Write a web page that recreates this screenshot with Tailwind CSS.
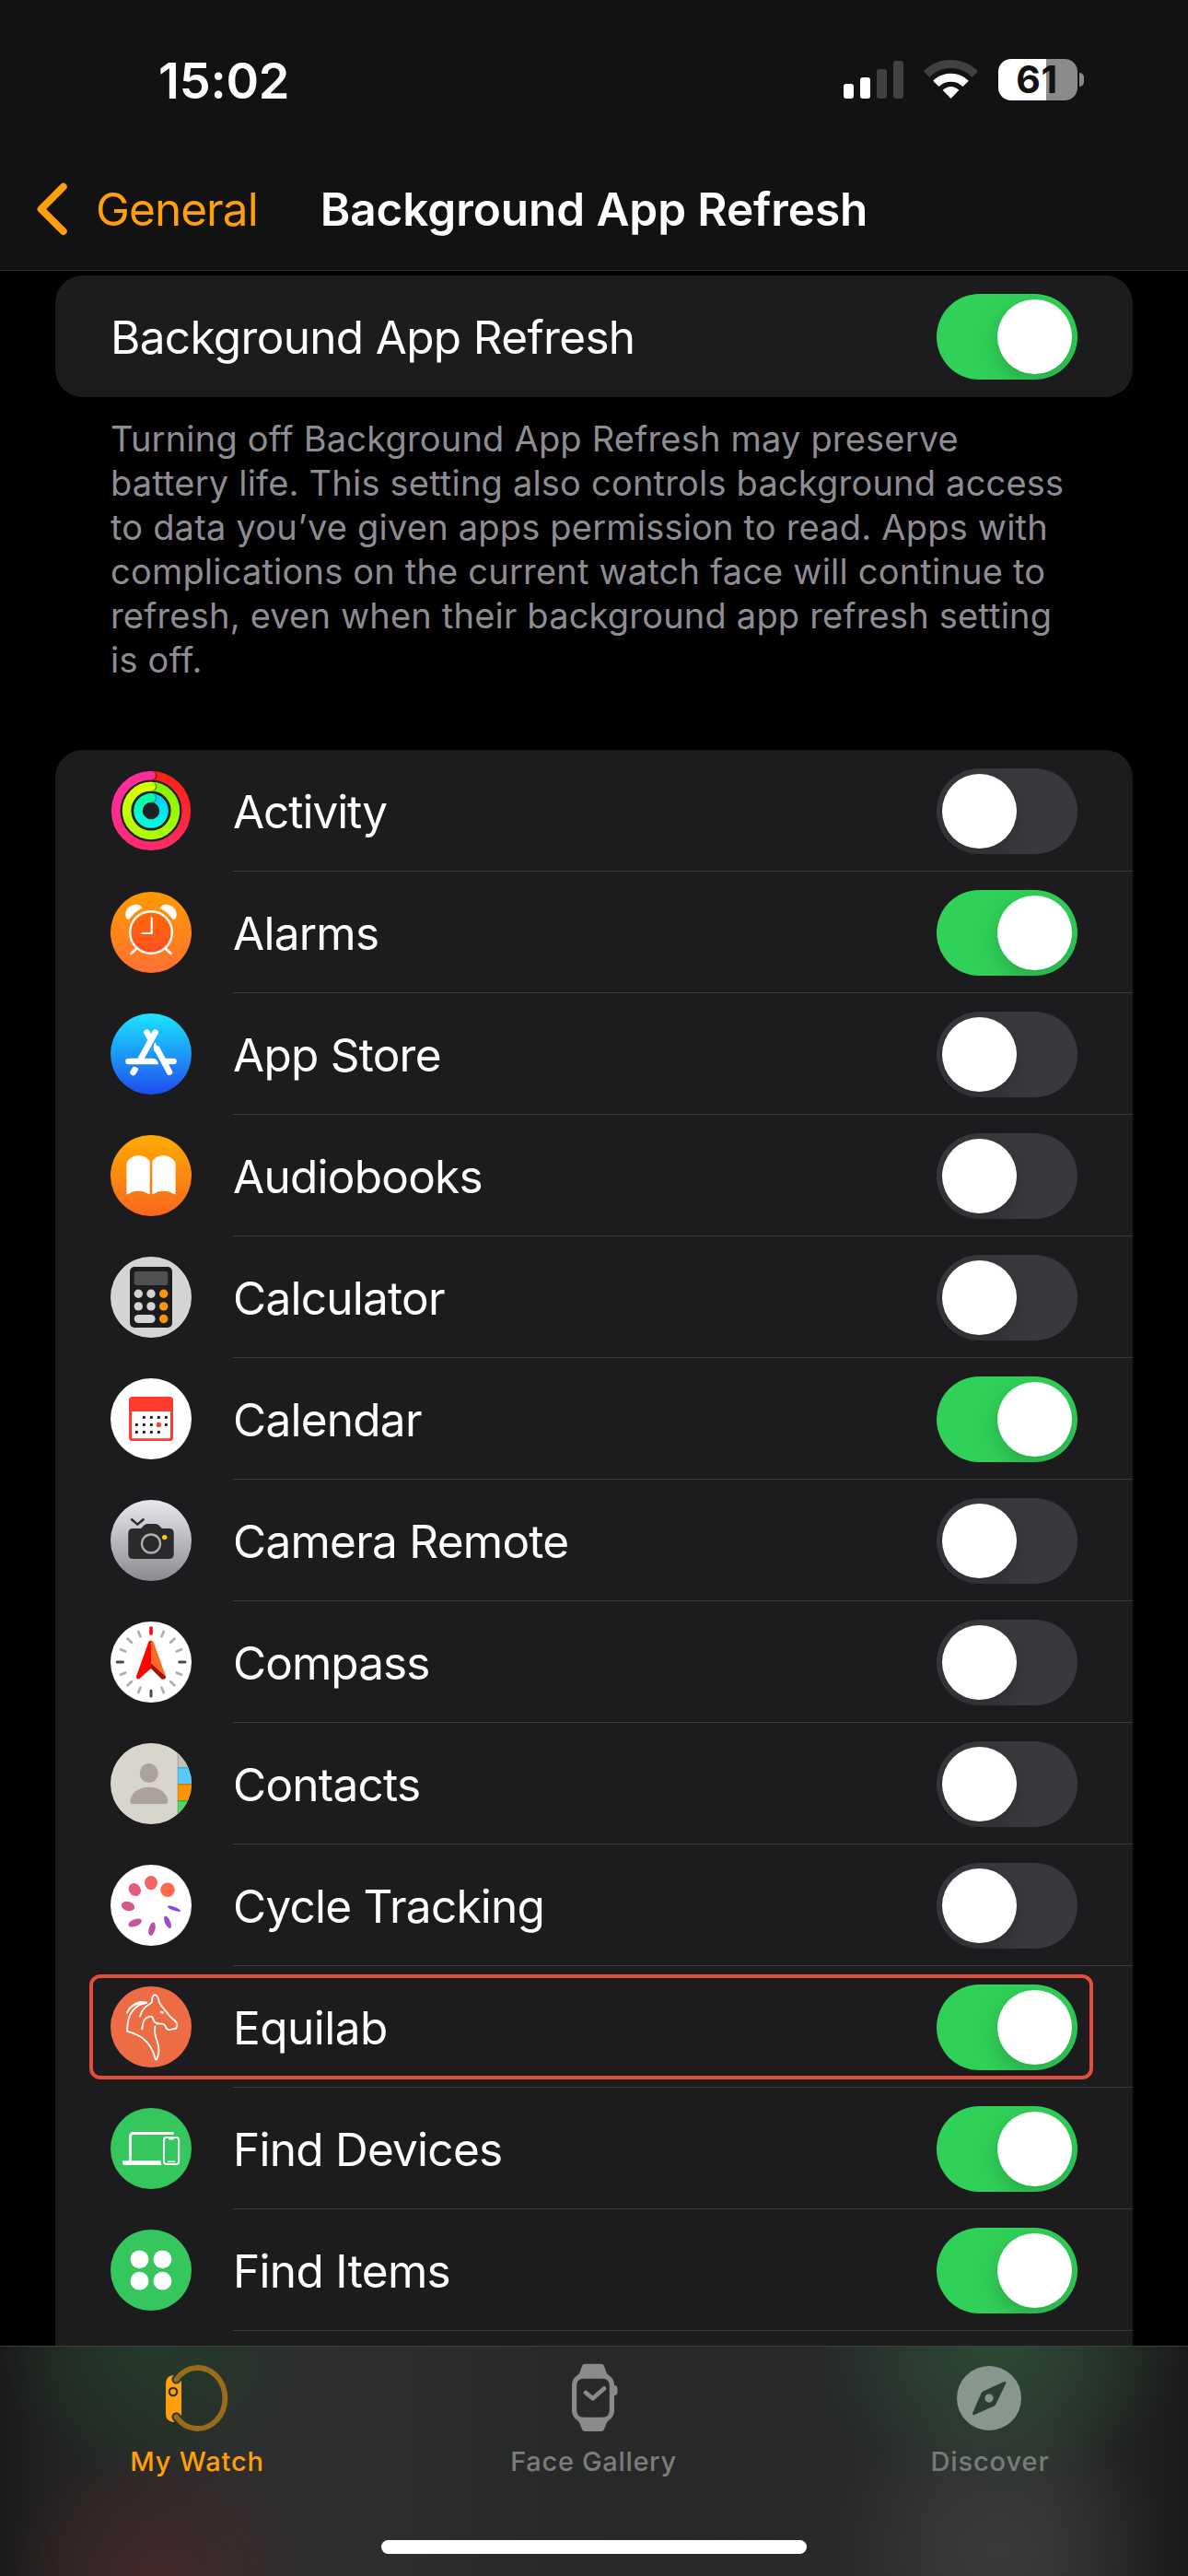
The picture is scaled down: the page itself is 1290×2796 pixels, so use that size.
<!DOCTYPE html>
<html lang="en">
<head>
<meta charset="utf-8">
<title>Background App Refresh</title>
<script src="https://cdn.jsdelivr.net/npm/@tailwindcss/browser@4"></script>
</head>
<body class="bg-black">
<div class="w-[1290px] h-[2796px] overflow-hidden bg-black text-white font-['Inter',sans-serif] flex flex-col">

  <!-- Status bar and navigation bar -->
  <header class="h-[294px] shrink-0 bg-[#121212] border-b border-[#2a2a2b] flex flex-col">
    <div class="h-[197px] pl-[172px] pr-[113px] flex justify-between items-start">
      <div class="pt-[55px] text-[54px] leading-[65px] font-semibold tracking-[-0.2px]">15:02</div>
      <div class="pt-[64px] flex items-start">
        <svg class="w-[66px] h-[45px]" viewBox="0 0 66 45">
          <rect x="0" y="27" width="11" height="16" rx="3" fill="#fff"/>
          <rect x="18" y="20" width="11" height="23" rx="3" fill="#fff"/>
          <rect x="36" y="11" width="11" height="32" rx="3" fill="#414141"/>
          <rect x="54" y="2" width="11" height="41" rx="3" fill="#414141"/>
        </svg>
        <svg class="w-[58px] h-[45px] ml-[21px]" viewBox="0 0 58 45" fill="none" stroke-width="9">
          <path d="M3 16.5A37.5 37.5 0 0 1 56 16.5" stroke="#414141"/>
          <path d="M13.3 26.9A22.8 22.8 0 0 1 45.7 26.9" stroke="#fff"/>
          <path d="M29.5 43L20.6 33.8Q29.5 26 38.4 33.8Z" fill="#fff"/>
        </svg>
        <div class="ml-[23px] w-[86px] h-[45px] rounded-[14px] bg-[linear-gradient(90deg,#fff_0_52px,#8a8a8a_52px)] flex items-center justify-center text-[#121212] text-[41px] leading-[45px] font-bold tracking-[0.5px] pr-[2px]">61</div>
        <div class="ml-[2px] mt-[15px] w-[5px] h-[15px] rounded-r-[5px] bg-[#8a8a8a]"></div>
      </div>
    </div>
    <div class="grid grid-cols-[1fr_auto_1fr] pl-[39px] pr-[39px]">
      <div class="flex items-start text-[#ff9f0a]">
        <svg class="w-[36px] h-[60px]" viewBox="0 0 36 60" fill="none" stroke="#ff9f0a" stroke-width="8" stroke-linecap="round" stroke-linejoin="round"><path d="M29.7 5.7L5.6 30L29.7 54"/></svg>
        <span class="ml-[29px] text-[49.5px] leading-[60px] tracking-[-0.95px]">General</span>
      </div>
      <h1 class="text-[49.5px] leading-[60px] font-semibold tracking-[-0.08px] whitespace-nowrap">Background App Refresh</h1>
      <div></div>
    </div>
  </header>

  <main class="h-[2252px] shrink-0 overflow-hidden px-[60px] flex flex-col">
    <section class="mt-[5px] h-[132px] shrink-0 rounded-[30px] bg-[#1c1c1e] pl-[60px] pr-[60px] pt-[2px] pb-px flex items-center justify-between">
      <span class="pt-[2px] text-[49.5px] leading-[61px] tracking-[-0.67px]">Background App Refresh</span>
      <span class="w-[153px] h-[93px] rounded-full bg-[#30d158] p-[6px] flex justify-end overflow-hidden"><i class="block size-[81px] rounded-full bg-white shadow-[0_9px_24px_rgba(0,0,0,0.2)]"></i></span>
    </section>

    <p class="mt-[21px] ml-[60px] text-[38px] leading-[48px] tracking-[0.2px] text-[#8d8d93] whitespace-nowrap">Turning off Background App Refresh may preserve<br>battery life. This setting also controls background access<br>to data you’ve given apps permission to read. Apps with<br>complications on the current watch face will continue to<br>refresh, even when their background app refresh setting<br>is off.</p>

    <ul class="mt-[74px] shrink-0 h-[1800px] rounded-t-[30px] bg-[#1c1c1e] pl-[60px] text-[49.5px] leading-[61px] tracking-[-0.75px]">

      <li class="h-[132px] flex items-center gap-[45px]">
        <svg class="size-[88px] shrink-0" viewBox="0 0 88 88" fill="none">
          <defs>
            <linearGradient id="r1" x1="0" y1="0" x2="0" y2="88" gradientUnits="userSpaceOnUse"><stop stop-color="#fc2113"/><stop offset=".5" stop-color="#ff2730"/><stop offset="1" stop-color="#ff2a6c"/></linearGradient>
            <linearGradient id="r2" x1="0" y1="0" x2="0" y2="88" gradientUnits="userSpaceOnUse"><stop stop-color="#ff2d9c"/><stop offset=".5" stop-color="#ff2c94"/><stop offset="1" stop-color="#ff2a6c"/></linearGradient>
            <linearGradient id="g1" x1="0" y1="15" x2="0" y2="73" gradientUnits="userSpaceOnUse"><stop stop-color="#86f500"/><stop offset="1" stop-color="#adff00"/></linearGradient>
            <linearGradient id="g2" x1="0" y1="15" x2="0" y2="73" gradientUnits="userSpaceOnUse"><stop stop-color="#dcff00"/><stop offset="1" stop-color="#adff00"/></linearGradient>
            <linearGradient id="b1" x1="0" y1="26" x2="0" y2="62" gradientUnits="userSpaceOnUse"><stop stop-color="#00cfff"/><stop offset="1" stop-color="#00fbe6"/></linearGradient>
            <linearGradient id="b2" x1="0" y1="26" x2="0" y2="62" gradientUnits="userSpaceOnUse"><stop stop-color="#00ffa6"/><stop offset="1" stop-color="#00fbe6"/></linearGradient>
          </defs>
          <circle cx="44" cy="44" r="43" fill="#202022"/>
          <g stroke-width="9.6">
            <path d="M44 5.7a38.3 38.3 0 0 1 0 76.6" stroke="url(#r1)"/><path d="M44 82.3a38.3 38.3 0 0 1 0-76.6" stroke="url(#r2)"/>
            <path d="M44 17.6a26.4 26.4 0 0 1 0 52.8" stroke="url(#g1)"/><path d="M44 70.4a26.4 26.4 0 0 1 0-52.8" stroke="url(#g2)"/>
            <path d="M44 30a14 14 0 0 1 0 28" stroke="url(#b1)"/><path d="M44 58a14 14 0 0 1 0-28" stroke="url(#b2)"/>
          </g>
          <g fill="#000" opacity=".35"><circle cx="46" cy="6.2" r="4.6"/><circle cx="46" cy="18" r="4.6"/><circle cx="46" cy="30.6" r="4.4"/></g>
          <g stroke-width="9.6" stroke-linecap="round"><path d="M42.500 5.700l1.500 0" stroke="#ff2d9c"/><path d="M42.500 17.600l1.500 0" stroke="#dcff00"/><path d="M43 30l1 0" stroke="#00ffa6"/></g>
        </svg>
        <div class="flex-1 h-full border-b border-[#3c3c3f] pr-[60px] pt-[2px] flex items-center justify-between">
          <span class="pt-[2px] tracking-[-1.05px]">Activity</span>
          <span class="w-[153px] h-[93px] rounded-full bg-[#39393d] p-[6px] flex justify-start overflow-hidden"><i class="block size-[81px] rounded-full bg-white shadow-[0_9px_24px_rgba(0,0,0,0.2)]"></i></span>
        </div>
      </li>

      <li class="h-[132px] flex items-center gap-[45px]">
        <svg class="size-[88px] shrink-0" viewBox="0 0 88 88" fill="none">
          <defs><linearGradient id="al" x1="0" y1="0" x2="0" y2="1"><stop stop-color="#ff9a00"/><stop offset="1" stop-color="#ff7034"/></linearGradient><linearGradient id="al2" x1="0" y1="0" x2="0" y2="1"><stop stop-color="#ff6a08"/><stop offset="1" stop-color="#ff5020"/></linearGradient></defs>
          <circle cx="44" cy="44" r="44" fill="url(#al)"/>
          <path d="M29 61L22.700 66.800M59 61L65.300 66.800" stroke="#fff" stroke-width="2.600" stroke-linecap="round"/>
          <circle cx="44" cy="44" r="22.800" fill="url(#al2)" stroke="#fff" stroke-width="2.400"/>
          <path d="M44.700 28.500V45H34.500" stroke="#fff" stroke-width="2.200" stroke-linecap="round" stroke-linejoin="round"/>
          <path d="M20.500 29.500C18 31 16.300 28 16.300 24.500C16.300 18 22 13.800 28 13.800C31.500 13.800 35 16.500 33.700 18C29 20.500 24 24.500 20.500 29.500Z" fill="#fff"/>
          <path d="M67.500 29.500C70 31 71.700 28 71.700 24.500C71.700 18 66 13.800 60 13.800C56.500 13.800 53 16.500 54.300 18C59 20.500 64 24.500 67.500 29.500Z" fill="#fff"/>
        </svg>
        <div class="flex-1 h-full border-b border-[#3c3c3f] pr-[60px] pt-[2px] flex items-center justify-between">
          <span class="pt-[2px]">Alarms</span>
          <span class="w-[153px] h-[93px] rounded-full bg-[#30d158] p-[6px] flex justify-end overflow-hidden"><i class="block size-[81px] rounded-full bg-white shadow-[0_9px_24px_rgba(0,0,0,0.2)]"></i></span>
        </div>
      </li>

      <li class="h-[132px] flex items-center gap-[45px]">
        <svg class="size-[88px] shrink-0" viewBox="0 0 88 88" fill="none">
          <defs><linearGradient id="as" x1="0" y1="0" x2="0" y2="1"><stop stop-color="#1ce6ff"/><stop offset="1" stop-color="#1e4cee"/></linearGradient></defs>
          <circle cx="44" cy="44" r="44" fill="url(#as)"/>
          <g stroke="#fff" stroke-width="6.600" stroke-linecap="round">
            <path d="M39.500 20.700L42.500 26"/><path d="M48.600 20.700L33 49" /><path d="M26.700 60.500L24.600 64"/><path d="M50.500 38.500L64 63.700"/><path d="M59 52H68.500"/>
          </g>
          <path d="M19.500 48.700H46.500Q51.500 49.500 52 55.300H19.500A3.300 3.300 0 0 1 19.500 48.700Z" fill="#fff"/>
          <path d="M48.500 31Q45.500 36 47.500 41L54 44Z" fill="#fff"/>
          <path d="M22 57.300Q26.500 55.600 30 58.600" stroke="#1f72f3" stroke-width="1.600"/>
        </svg>
        <div class="flex-1 h-full border-b border-[#3c3c3f] pr-[60px] pt-[2px] flex items-center justify-between">
          <span class="pt-[2px]">App Store</span>
          <span class="w-[153px] h-[93px] rounded-full bg-[#39393d] p-[6px] flex justify-start overflow-hidden"><i class="block size-[81px] rounded-full bg-white shadow-[0_9px_24px_rgba(0,0,0,0.2)]"></i></span>
        </div>
      </li>

      <li class="h-[132px] flex items-center gap-[45px]">
        <svg class="size-[88px] shrink-0" viewBox="0 0 88 88" fill="none">
          <defs><linearGradient id="ab" x1="0" y1="0" x2="0" y2="1"><stop stop-color="#ffab00"/><stop offset="1" stop-color="#f9661f"/></linearGradient></defs>
          <circle cx="44" cy="44" r="44" fill="url(#ab)"/>
          <path d="M17.400 31Q17.400 29 19 27.500C25 20.500 37 20.500 42.700 28.500V63.500Q42.700 64.700 41.500 64C35 59.500 25.500 59.500 19 64Q17.400 65 17.400 63.500Z" fill="#fff"/>
          <path d="M70.600 31Q70.600 29 69 27.500C63 20.500 51 20.500 45.300 28.500V63.500Q45.300 64.700 46.500 64C53 59.500 62.500 59.500 69 64Q70.600 65 70.600 63.500Z" fill="#fff"/>
        </svg>
        <div class="flex-1 h-full border-b border-[#3c3c3f] pr-[60px] pt-[2px] flex items-center justify-between">
          <span class="pt-[2px]">Audiobooks</span>
          <span class="w-[153px] h-[93px] rounded-full bg-[#39393d] p-[6px] flex justify-start overflow-hidden"><i class="block size-[81px] rounded-full bg-white shadow-[0_9px_24px_rgba(0,0,0,0.2)]"></i></span>
        </div>
      </li>

      <li class="h-[132px] flex items-center gap-[45px]">
        <svg class="size-[88px] shrink-0" viewBox="0 0 88 88" fill="none">
          <circle cx="44" cy="44" r="44" fill="#d4d4d2"/>
          <rect x="21" y="11" width="46" height="66" rx="5" fill="#1c1c1c"/>
          <rect x="25.700" y="16" width="36.600" height="15" rx="2.500" fill="#505050"/>
          <g fill="#d4d4d2"><circle cx="30.300" cy="40.300" r="4.700"/><circle cx="44" cy="40.300" r="4.700"/><circle cx="30.300" cy="53.900" r="4.700"/><circle cx="44" cy="53.900" r="4.700"/><rect x="25.700" y="62.900" width="22.900" height="9.200" rx="4.600"/></g>
          <g fill="#ff9500"><circle cx="57.700" cy="40.300" r="4.700"/><circle cx="57.700" cy="53.900" r="4.700"/><circle cx="57.700" cy="67.500" r="4.700"/></g>
        </svg>
        <div class="flex-1 h-full border-b border-[#3c3c3f] pr-[60px] pt-[2px] flex items-center justify-between">
          <span class="pt-[2px]">Calculator</span>
          <span class="w-[153px] h-[93px] rounded-full bg-[#39393d] p-[6px] flex justify-start overflow-hidden"><i class="block size-[81px] rounded-full bg-white shadow-[0_9px_24px_rgba(0,0,0,0.2)]"></i></span>
        </div>
      </li>

      <li class="h-[132px] flex items-center gap-[45px]">
        <svg class="size-[88px] shrink-0" viewBox="0 0 88 88" fill="none">
          <circle cx="44" cy="44" r="44" fill="#fff"/>
          <rect x="20" y="20" width="48" height="48" rx="3.500" fill="#ff3b30"/>
          <path d="M23 36H65V64Q65 65.200 63.800 65.200H24.200Q23 65.200 23 64Z" fill="#fff"/>
          <g fill="#111"><circle cx="36.400" cy="42.400" r="1.600"/><circle cx="44.400" cy="42.400" r="1.600"/><circle cx="52.400" cy="42.400" r="1.600"/><circle cx="60.400" cy="42.400" r="1.600"/>
          <circle cx="28.400" cy="50.400" r="1.600"/><circle cx="36.400" cy="50.400" r="1.600"/><circle cx="44.400" cy="50.400" r="1.600"/><circle cx="60.400" cy="50.400" r="1.600"/>
          <circle cx="28.400" cy="58.400" r="1.600"/><circle cx="36.400" cy="58.400" r="1.600"/><circle cx="44.400" cy="58.400" r="1.600"/><circle cx="52.400" cy="58.400" r="1.600"/></g>
          <circle cx="52.400" cy="50.400" r="2.600" fill="#ff3b30"/>
        </svg>
        <div class="flex-1 h-full border-b border-[#3c3c3f] pr-[60px] pt-[2px] flex items-center justify-between">
          <span class="pt-[2px]">Calendar</span>
          <span class="w-[153px] h-[93px] rounded-full bg-[#30d158] p-[6px] flex justify-end overflow-hidden"><i class="block size-[81px] rounded-full bg-white shadow-[0_9px_24px_rgba(0,0,0,0.2)]"></i></span>
        </div>
      </li>

      <li class="h-[132px] flex items-center gap-[45px]">
        <svg class="size-[88px] shrink-0" viewBox="0 0 88 88" fill="none">
          <defs><linearGradient id="ca" x1="0" y1="0" x2="0" y2="1"><stop stop-color="#e9e8ee"/><stop offset="1" stop-color="#8a8a90"/></linearGradient></defs>
          <circle cx="44" cy="44" r="44" fill="url(#ca)"/>
          <path d="M24.500 31H33L36.500 27.600Q38 26 40 26H49Q51 26 52.500 27.600L56 31H63.500Q68.700 31 68.700 36V59Q68.700 64 63.500 64H24.500Q19.300 64 19.300 59V36Q19.300 31 24.500 31Z" fill="#2a2a2b"/>
          <circle cx="44" cy="47.500" r="10" stroke="#aeadb4" stroke-width="2.300"/>
          <circle cx="58.700" cy="40.600" r="2.700" fill="#ffcc00"/>
          <path d="M23 21.200L29.300 26.600L35.600 21.200" stroke="#2a2a2b" stroke-width="2.500" stroke-linecap="round" stroke-linejoin="round"/>
        </svg>
        <div class="flex-1 h-full border-b border-[#3c3c3f] pr-[60px] pt-[2px] flex items-center justify-between">
          <span class="pt-[2px]">Camera Remote</span>
          <span class="w-[153px] h-[93px] rounded-full bg-[#39393d] p-[6px] flex justify-start overflow-hidden"><i class="block size-[81px] rounded-full bg-white shadow-[0_9px_24px_rgba(0,0,0,0.2)]"></i></span>
        </div>
      </li>

      <li class="h-[132px] flex items-center gap-[45px]">
        <svg class="size-[88px] shrink-0" viewBox="0 0 88 88" fill="none">
          <circle cx="44" cy="44" r="44" fill="#fff"/>
          <g stroke="#aeaeae" stroke-width="2.700" stroke-linecap="round">
            <path id="tk" d="M44 8.200V14" transform="rotate(22.500 44 44)"/>
            <path d="M44 8.200V14" transform="rotate(45 44 44)"/><path d="M44 8.200V14" transform="rotate(67.500 44 44)"/>
            <path d="M44 8.200V14" transform="rotate(112.500 44 44)"/><path d="M44 8.200V14" transform="rotate(135 44 44)"/><path d="M44 8.200V14" transform="rotate(157.500 44 44)"/>
            <path d="M44 8.200V14" transform="rotate(202.500 44 44)"/><path d="M44 8.200V14" transform="rotate(225 44 44)"/><path d="M44 8.200V14" transform="rotate(247.500 44 44)"/>
            <path d="M44 8.200V14" transform="rotate(292.500 44 44)"/><path d="M44 8.200V14" transform="rotate(315 44 44)"/><path d="M44 8.200V14" transform="rotate(337.500 44 44)"/>
          </g>
          <g stroke="#4a4a4a" stroke-width="3" stroke-linecap="round"><path d="M74.700 44H81M7.200 44H13.500M44 75V81"/></g>
          <path d="M44 7V13" stroke="#ff0a0a" stroke-width="3.700" stroke-linecap="round"/>
          <path d="M44 44L58 62.500Q60.500 62 59.800 59.500L44 49L28.500 59L30 62.500Z" fill="#a31200"/>
          <path d="M44 20.500Q46 20.500 46.800 22.500L60 59.500Q60 60.500 58.800 59.500L44 45.500Z" fill="#ff6a27"/>
          <path d="M44 20.500Q42 20.500 41.200 22.500L28.200 59Q27.500 62.600 31 62.500L44 49.500Z" fill="#ff0400"/>
          <path d="M44 45.500V51L55.500 62.500Q59 63.500 60 59.800Z" fill="#a31200"/>
          <path d="M33.500 60L44 51V46.500L31 62.500Z" fill="#ff0400"/>
        </svg>
        <div class="flex-1 h-full border-b border-[#3c3c3f] pr-[60px] pt-[2px] flex items-center justify-between">
          <span class="pt-[2px] tracking-[-0.95px]">Compass</span>
          <span class="w-[153px] h-[93px] rounded-full bg-[#39393d] p-[6px] flex justify-start overflow-hidden"><i class="block size-[81px] rounded-full bg-white shadow-[0_9px_24px_rgba(0,0,0,0.2)]"></i></span>
        </div>
      </li>

      <li class="h-[132px] flex items-center gap-[45px]">
        <svg class="size-[88px] shrink-0 rounded-full" viewBox="0 0 88 88" fill="none">
          <rect width="88" height="88" fill="#d8d6cc"/>
          <rect x="73" width="15" height="26" fill="#c3bfb9"/>
          <rect x="73" y="26" width="15" height="18" fill="#5ac8fa"/><rect x="73" y="26" width="15" height="1.500" fill="#4fa9d2"/>
          <rect x="73" y="44" width="15" height="18" fill="#ff9500"/><rect x="73" y="44" width="15" height="1.500" fill="#cc7a08"/>
          <rect x="73" y="62" width="15" height="26" fill="#4cd964"/><rect x="73" y="62" width="15" height="1.500" fill="#3fae54"/>
          <rect x="72.600" width="1" height="88" fill="#000" opacity=".2"/>
          <ellipse cx="41.800" cy="32.500" rx="10" ry="10.600" fill="#aaa29b"/>
          <path d="M21.300 63C21.800 55 30 47.800 41.800 47.800S61.800 55 62.300 63Q62.300 66 59.300 66H24.300Q21.300 66 21.300 63Z" fill="#aaa29b"/>
        </svg>
        <div class="flex-1 h-full border-b border-[#3c3c3f] pr-[60px] pt-[2px] flex items-center justify-between">
          <span class="pt-[2px]">Contacts</span>
          <span class="w-[153px] h-[93px] rounded-full bg-[#39393d] p-[6px] flex justify-start overflow-hidden"><i class="block size-[81px] rounded-full bg-white shadow-[0_9px_24px_rgba(0,0,0,0.2)]"></i></span>
        </div>
      </li>

      <li class="h-[132px] flex items-center gap-[45px]">
        <svg class="size-[88px] shrink-0" viewBox="0 0 88 88" fill="none">
          <circle cx="44" cy="44" r="44" fill="#fff"/>
          <ellipse cx="44" cy="19.600" rx="7" ry="7.700" fill="#f26562"/>
          <circle cx="62" cy="27.300" r="7.800" fill="#ff6a4d"/>
          <ellipse cx="26.300" cy="27" rx="6.300" ry="7.400" transform="rotate(-35 26.300 27)" fill="#e25d77"/>
          <ellipse cx="19" cy="45" rx="7.300" ry="5" transform="rotate(15 19 45)" fill="#d45b87"/>
          <ellipse cx="26.700" cy="63" rx="7.700" ry="3.800" transform="rotate(-22 26.700 63)" fill="#c9569b"/>
          <ellipse cx="45" cy="69.700" rx="3.400" ry="7.400" transform="rotate(15 45 69.700)" fill="#b853a7"/>
          <ellipse cx="62" cy="62.300" rx="2.900" ry="7.200" transform="rotate(-24 62 62.300)" fill="#9a4cd0"/>
          <ellipse cx="69" cy="47.700" rx="7.500" ry="1.900" transform="rotate(20 69 47.700)" fill="#7a45f5"/>
        </svg>
        <div class="flex-1 h-full border-b border-[#3c3c3f] pr-[60px] pt-[2px] flex items-center justify-between">
          <span class="pt-[2px]">Cycle Tracking</span>
          <span class="w-[153px] h-[93px] rounded-full bg-[#39393d] p-[6px] flex justify-start overflow-hidden"><i class="block size-[81px] rounded-full bg-white shadow-[0_9px_24px_rgba(0,0,0,0.2)]"></i></span>
        </div>
      </li>

      <li class="relative h-[132px] flex items-center gap-[45px]">
        <svg class="size-[88px] shrink-0" viewBox="0 0 88 88" fill="none">
          <circle cx="44" cy="44" r="44" fill="#ee6c43"/>
          <g stroke="#fff" stroke-width="1.800" stroke-linecap="round" stroke-linejoin="round">
            <path d="M32 32.700C33.500 27.500 37 22.500 40.500 20.500C43 19 45 18 45 16.500C44.800 13 46 9.200 48.300 9.200C51 9.400 52.300 14 53 17.500C55 22 58 24 60.500 27.500C64 32.500 68 36 71 38.500C72.800 40.500 72.500 43.500 71 45.500C69.500 46.700 67.500 45.700 66 46.700C63.500 48 61 46.500 60.300 45C59.500 42.500 59.500 41.500 56.500 40.700C53.500 40.300 50.500 41.300 48.200 39C46.500 37.500 46.500 34.500 45 33C41.500 32 37.500 34.500 36 38C34.700 41 34.700 43.500 34.300 46.300"/>
            <path d="M18 28.700C20.500 22.500 26.500 17.500 33 17C35.500 16.900 37.500 17 39.300 17.700C36.500 19.200 33 19 29.500 21.500C20.500 27.500 18.500 36.500 18 48.700C23 50.500 29 52 34.500 56C42 61.500 46.500 70 48.700 78.500C49 80 50 80 50.300 78.800C53.500 72 53 66.500 51 60.500C48.500 54.500 47 50 48.500 43.500"/>
            <path d="M20 24.500C25 19.500 30 18 37.500 17.800"/>
          </g>
          <ellipse cx="55.700" cy="28.200" rx="2.100" ry="1.200" transform="rotate(20 55.700 28.200)" fill="#fff"/>
        </svg>
        <div class="flex-1 h-full border-b border-[#3c3c3f] pr-[60px] pt-[2px] flex items-center justify-between">
          <span class="pt-[2px] tracking-[-0.5px]">Equilab</span>
          <span class="w-[153px] h-[93px] rounded-full bg-[#30d158] p-[6px] flex justify-end overflow-hidden"><i class="block size-[81px] rounded-full bg-white shadow-[0_9px_24px_rgba(0,0,0,0.2)]"></i></span>
        </div>
        <div class="absolute left-[-23px] right-[43px] top-[9px] h-[114px] border-4 border-[#e54e3a] rounded-[12px]"></div>
      </li>

      <li class="h-[132px] flex items-center gap-[45px]">
        <svg class="size-[88px] shrink-0" viewBox="0 0 88 88" fill="none">
          <circle cx="44" cy="44" r="44" fill="#35c75d"/>
          <path d="M67.500 27.500H25Q21.500 27.500 21.500 31V58" stroke="#fff" stroke-width="2.800" stroke-linecap="round"/>
          <path d="M13 57.300H54.500Q54.500 60 55.500 62H15.500Q13 62 13 59.500Z" fill="#fff"/>
          <rect x="58" y="32" width="16.200" height="29" rx="2.800" stroke="#fff" stroke-width="2"/>
          <path d="M63 32H69V33.200Q69 34.600 67.500 34.600H64.500Q63 34.600 63 33.200Z" fill="#fff"/>
          <path d="M62.500 58.300H69.700" stroke="#fff" stroke-width="1.400" stroke-linecap="round"/>
        </svg>
        <div class="flex-1 h-full border-b border-[#3c3c3f] pr-[60px] pt-[2px] flex items-center justify-between">
          <span class="pt-[2px]">Find Devices</span>
          <span class="w-[153px] h-[93px] rounded-full bg-[#30d158] p-[6px] flex justify-end overflow-hidden"><i class="block size-[81px] rounded-full bg-white shadow-[0_9px_24px_rgba(0,0,0,0.2)]"></i></span>
        </div>
      </li>

      <li class="h-[132px] flex items-center gap-[45px]">
        <svg class="size-[88px] shrink-0" viewBox="0 0 88 88" fill="none">
          <circle cx="44" cy="44" r="44" fill="#35c75d"/>
          <g fill="#fff"><circle cx="31.500" cy="32.300" r="9.900"/><circle cx="56.400" cy="32.300" r="9.900"/><circle cx="31.500" cy="55.700" r="9.900"/><circle cx="56.400" cy="55.700" r="9.900"/></g>
        </svg>
        <div class="flex-1 h-full border-b border-[#3c3c3f] pr-[60px] pt-[2px] flex items-center justify-between">
          <span class="pt-[2px] tracking-[-0.67px]">Find Items</span>
          <span class="w-[153px] h-[93px] rounded-full bg-[#30d158] p-[6px] flex justify-end overflow-hidden"><i class="block size-[81px] rounded-full bg-white shadow-[0_9px_24px_rgba(0,0,0,0.2)]"></i></span>
        </div>
      </li>
    </ul>
  </main>

  <footer class="h-[250px] shrink-0 border-t border-[#3d3d3f] bg-[radial-gradient(ellipse_170px_150px_at_165px_0px,rgba(34,62,42,0.85),rgba(34,62,42,0)),radial-gradient(ellipse_170px_150px_at_170px_250px,rgba(72,40,42,0.85),rgba(72,40,42,0)),radial-gradient(ellipse_200px_150px_at_1085px_0px,rgba(42,74,52,0.95),rgba(42,74,52,0)),radial-gradient(ellipse_180px_160px_at_1085px_220px,rgba(60,61,60,0.8),rgba(60,61,60,0)),linear-gradient(90deg,#191a19_0%,#222322_5%,#2d2e2e_20%,#2d2d2d_35%,#28292a_45%,#282828_62%,#27292a_72%,#2d302f_80%,#2c2f2d_88%,#222422_94%,#1a1a1a_100%)]">
    <nav class="flex pt-[18px]">
      <div class="flex-1 flex flex-col items-center gap-[13px] text-[#ff9f0a]">
        <svg class="w-[74px] h-[76px]" viewBox="0 1 74 76" fill="none">
          <defs><mask id="gap"><rect width="74" height="80" fill="#fff"/><path d="M13.500 18.600A29.600 33 0 1 1 13.500 59.400" stroke="#000" stroke-width="10" stroke-linecap="round"/><circle cx="10" cy="32" r="4.200" stroke="#000" stroke-width="2.200"/></mask></defs>
          <path mask="url(#gap)" d="M10 14H14Q19 15 19 22V57Q19 64 14 65H10Q2 64 2 56V23Q2 15 10 14Z" fill="#ff9f0a"/>
          <path d="M13.500 18.600A29.600 33 0 1 1 13.500 59.400" stroke="#ff9f0a" stroke-opacity=".53" stroke-width="5.800" stroke-linecap="round"/>
        </svg>
        <span class="text-[29px] leading-[35px] font-medium tracking-[0.85px] mr-[2px]">My Watch</span>
      </div>
      <div class="flex-1 flex flex-col items-center gap-[13px] text-[#7c7c7c]">
        <svg class="w-[50px] h-[76px] overflow-visible" viewBox="0 0 50 76" fill="none">
          <path fill="#8a8a8a" fill-rule="evenodd" d="M15.500 .8H32.500Q35 .8 36 3L38.500 10.300Q39.500 12.300 41.500 13.500Q47 17 47 24V51Q47 58 41.500 61.800Q39.500 63 38.500 65.300L36 72Q35 74 32.500 74H15.500Q13 74 12 72L9.500 65.300Q8.500 63 6.500 61.800Q1 58 1 51V24Q1 17 6.500 13.500Q8.500 12.300 9.500 10.300L12 3Q13 .8 15.500 .8ZM14 16.700Q6.200 16.700 6.200 24.500V51Q6.200 58.700 14 58.700H34Q41.800 58.700 41.800 51V24.500Q41.800 16.700 34 16.700Z"/>
          <path d="M47 24Q50.500 24 50.500 28V31Q50.500 35 47 35Z" fill="#8a8a8a"/>
          <path d="M16 32L23.700 38.300L36 27.500" stroke="#8a8a8a" stroke-width="4.700" stroke-linecap="round" stroke-linejoin="round"/>
        </svg>
        <span class="text-[29px] leading-[35px] font-medium tracking-[0.66px] mr-[1px]">Face Gallery</span>
      </div>
      <div class="flex-1 flex flex-col items-center gap-[13px] text-white/37">
        <svg class="w-[72px] h-[76px]" viewBox="0 0 72 76">
          <path fill="#88978d" fill-rule="evenodd" d="M35 3A35 35 0 1 1 35 73A35 35 0 1 1 35 3ZM51.500 20.100L28.500 30.500Q27 31.200 26.400 32.700L17.200 54Q16.500 56.700 19 56L40.500 46.500Q42 45.500 42.700 44L53.200 22Q53.700 19.400 51.500 20.100ZM35 33.500A4.600 4.600 0 1 0 35 42.700A4.600 4.600 0 1 0 35 33.500Z"/>
        </svg>
        <span class="text-[29px] leading-[35px] font-medium tracking-[0.89px]">Discover</span>
      </div>
    </nav>
    <div class="mx-auto mt-[68px] w-[462px] h-[15px] rounded-full bg-white"></div>
  </footer>
</div>
</body>
</html>
